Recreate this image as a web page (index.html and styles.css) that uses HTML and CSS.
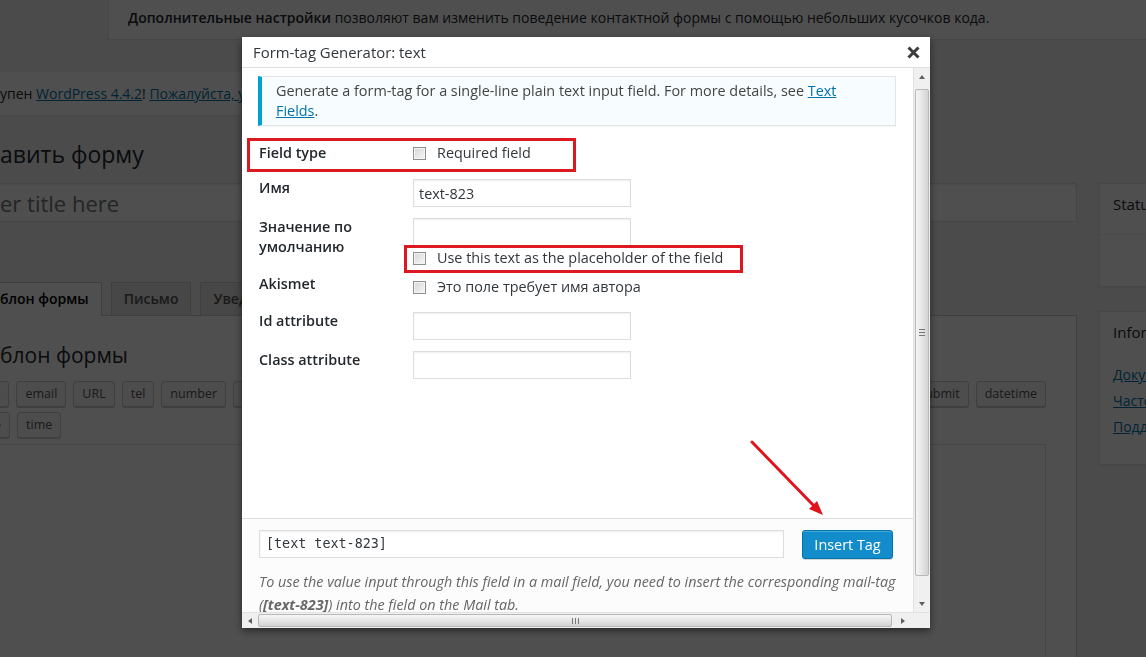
FILE: index.html
```html
<!DOCTYPE html>
<html lang="ru">
<head>
<meta charset="utf-8">
<title>Редактировать форму ‹ Contact Form 7</title>
<link rel="stylesheet" href="styles.css">
</head>
<body>
<div class="wp-page">
  <div class="top-note"><strong>Дополнительные настройки</strong> позволяют вам изменить поведение контактной формы с помощью небольших кусочков кода.</div>
  <div class="nag">упен <a href="#">WordPress 4.4.2</a>! <a href="#">Пожалуйста, уведомите администратора сайта</a>.</div>
  <h1 class="page-title">авить форму</h1>
  <div class="columns">
    <div class="main-col">
      <div class="title-input">er title here</div>
      <ul class="tabs">
        <li class="tab active">блон формы</li>
        <li class="tab">Письмо</li>
        <li class="tab">Уведомления при отправке формы</li>
      </ul>
      <div class="panel">
        <h2 class="panel-title">блон формы</h2>
        <div class="tag-row">
          <div class="tag-group">
            <span class="tag-btn">text</span>
            <span class="tag-btn">email</span>
            <span class="tag-btn">URL</span>
            <span class="tag-btn">tel</span>
            <span class="tag-btn">number</span>
            <span class="tag-btn">textarea</span>
          </div>
          <div class="tag-group">
            <span class="tag-btn">submit</span>
            <span class="tag-btn">datetime</span>
          </div>
        </div>
        <div class="tag-row second">
          <div class="tag-group">
            <span class="tag-btn">date</span>
            <span class="tag-btn">time</span>
          </div>
        </div>
        <div class="form-textarea"></div>
      </div>
    </div>
    <aside class="side-col">
      <div class="postbox status">
        <h2 class="postbox-title">Status</h2>
        <div class="postbox-body"></div>
      </div>
      <div class="postbox info">
        <h2 class="postbox-title">Information</h2>
        <ul class="info-links">
          <li><a href="#">Документация</a></li>
          <li><a href="#">Часто задаваемые вопросы</a></li>
          <li><a href="#">Поддержка</a></li>
        </ul>
      </div>
    </aside>
  </div>
</div>

<div class="overlay"></div>

<div class="modal">
  <div class="modal-head">
    <span class="modal-title">Form-tag Generator: text</span>
    <svg class="close-ico" width="13" height="13" viewBox="0 0 13 13" aria-hidden="true"><path d="M1.5 1.5 L11.5 11.5 M11.5 1.5 L1.5 11.5" stroke="#3c3c3c" stroke-width="3" fill="none"/></svg>
  </div>
  <div class="modal-main">
    <div class="modal-content">
      <div class="tg-main">
        <div class="notice">Generate a form-tag for a single-line plain text input field. For more details, see <a href="#">Text<br>Fields</a>.</div>
        <div class="tg-rows">
          <div class="tg-row r1">
            <div class="tg-label">Field type</div>
            <div class="tg-ctrl"><label class="cb"><input type="checkbox"><span>Required field</span></label></div>
          </div>
          <div class="tg-row r2">
            <div class="tg-label">Имя</div>
            <div class="tg-ctrl"><input class="txt" type="text" value="text-823"></div>
          </div>
          <div class="tg-row r3">
            <div class="tg-label">Значение по умолчанию</div>
            <div class="tg-ctrl"><input class="txt" type="text" value=""><label class="cb cb-under"><input type="checkbox"><span>Use this text as the placeholder of the field</span></label></div>
          </div>
          <div class="tg-row r4">
            <div class="tg-label">Akismet</div>
            <div class="tg-ctrl"><label class="cb"><input type="checkbox"><span>Это поле требует имя автора</span></label></div>
          </div>
          <div class="tg-row r5">
            <div class="tg-label">Id attribute</div>
            <div class="tg-ctrl"><input class="txt" type="text" value=""></div>
          </div>
          <div class="tg-row r6">
            <div class="tg-label">Class attribute</div>
            <div class="tg-ctrl"><input class="txt" type="text" value=""></div>
          </div>
        </div>
      </div>
      <div class="insert-box">
        <div class="insert-row">
          <div class="tag-input">[text text-823]</div>
          <span class="btn-primary">Insert Tag</span>
        </div>
        <p class="mail-hint">To use the value input through this field in a mail field, you need to insert the corresponding mail-tag<br>(<strong>[text-823]</strong>) into the field on the Mail tab.</p>
      </div>
      <div class="annot box-one"></div>
      <div class="annot box-two"></div>
      <svg class="annot-arrow" width="671" height="544" viewBox="0 0 671 544" aria-hidden="true">
        <line x1="510" y1="374" x2="574" y2="440" stroke="#e0141c" stroke-width="3" stroke-linecap="round"/>
        <polygon points="581,447 567,441 575,433" fill="#e0141c"/>
      </svg>
    </div>
    <div class="vscroll">
      <div class="sb-btn"><span class="tri-up"></span></div>
      <div class="vthumb"><span class="grip-h"></span></div>
      <div class="sb-fill"></div>
      <div class="sb-btn"><span class="tri-down"></span></div>
    </div>
  </div>
  <div class="hscroll">
    <div class="sb-btn-h"><span class="tri-left"></span></div>
    <div class="hthumb"><span class="grip-v"></span></div>
    <div class="sb-btn-h wide"><span class="tri-right"></span></div>
    <div class="sb-corner"></div>
  </div>
</div>
</body>
</html>
```

FILE: styles.css
```css
html, body {
  margin: 0;
  padding: 0;
  height: 100%;
  overflow: hidden;
}
body {
  background: #f1f1f1;
  font-family: "Open Sans", "Noto Sans", sans-serif;
  font-size: 14px;
  color: #23282d;
}
a { color: #0073aa; text-decoration: underline; }

/* ---------- underlying WP page ---------- */
.wp-page {
  width: 1146px;
}
.top-note {
  margin-left: 108px;
  height: 40px;
  box-sizing: border-box;
  background: #fff;
  border-left: 1px solid #e5e5e5;
  border-bottom: 1px solid #e5e5e5;
  padding: 8px 0 0 19px;
  line-height: 20px;
  white-space: nowrap;
  overflow: hidden;
}
.top-note strong { font-weight: 600; }
.nag {
  display: inline-block;
  margin-top: 32px;
  background: #fff;
  padding: 11px 15px 11px 0;
  line-height: 21px;
  box-shadow: 0 1px 1px rgba(0,0,0,.04);
  white-space: nowrap;
}
.page-title {
  margin: 24px 0 0;
  font-size: 23px;
  font-weight: 400;
  line-height: 30px;
}
.columns {
  display: flex;
  gap: 22px;
  margin-top: 14px;
}
.main-col { width: 1077px; flex: none; }
.side-col { width: 280px; flex: none; }
.title-input {
  height: 39px;
  box-sizing: border-box;
  background: #fff;
  border: 1px solid #ddd;
  border-left: none;
  font-size: 22px;
  line-height: 39px;
  color: #72777c;
  box-shadow: inset 0 1px 2px rgba(0,0,0,.07);
}
.tabs {
  list-style: none;
  margin: 60px 0 0;
  padding: 0;
  display: flex;
  gap: 9px;
  position: relative;
  z-index: 1;
}
.tab {
  height: 33px;
  box-sizing: border-box;
  border: 1px solid #ccc;
  border-bottom: none;
  background: #e4e4e4;
  color: #555;
  font-weight: 600;
  padding: 0 12px;
  line-height: 31px;
  white-space: nowrap;
}
.tab.active {
  background: #fdfdfd;
  color: #000;
  border-left: none;
  padding-left: 0;
  height: 34px;
}
.panel {
  margin-top: -1px;
  border: 1px solid #ccc;
  border-left: none;
  background: #fdfdfd;
  padding: 25px 30px 0 0;
  height: 400px;
}
.panel-title {
  margin: 0;
  font-size: 21px;
  font-weight: 400;
  line-height: 28px;
}
.tag-row {
  display: flex;
  justify-content: space-between;
  margin: 12px 0 0 -31px;
}
.tag-row.second { margin: 5px 0 0 -34px; }
.tag-group { display: flex; gap: 7px; }
.tag-btn {
  height: 26px;
  box-sizing: border-box;
  border: 1px solid #ccc;
  border-radius: 3px;
  background: #f7f7f7;
  box-shadow: 0 1px 0 #ccc;
  padding: 0 8px;
  font-size: 12.5px;
  line-height: 24px;
  color: #555;
  white-space: nowrap;
}
.form-textarea {
  margin: 6px 0 0 -33px;
  height: 300px;
  background: #fff;
  border: 1px solid #ddd;
}
.postbox {
  background: #fff;
  border: 1px solid #e5e5e5;
  box-shadow: 0 1px 1px rgba(0,0,0,.04);
}
.postbox-title {
  margin: 0;
  font-size: 15px;
  font-weight: 400;
  line-height: 20px;
  padding: 10px 13px;
}
.status .postbox-title {
  padding-bottom: 20px;
  border-bottom: 1px solid #eee;
}
.status .postbox-body { height: 51px; }
.info { margin-top: 24px; }
.info-links {
  list-style: none;
  margin: 10px 0 0;
  padding: 0 13px 24px;
  line-height: 26px;
}

/* ---------- overlay ---------- */
.overlay {
  position: fixed;
  inset: 0;
  z-index: 10;
  background: rgba(0,0,0,.69);
}

/* ---------- modal ---------- */
.modal {
  position: fixed;
  z-index: 20;
  left: 242px;
  top: 37px;
  width: 688px;
  height: 591px;
  background: #fff;
  box-shadow: 0 3px 8px rgba(0,0,0,.5);
  display: flex;
  flex-direction: column;
  font-size: 14.4px;
}
.modal-head {
  height: 31px;
  box-sizing: border-box;
  border-bottom: 1px solid #ddd;
  padding: 0 10px 0 11px;
  display: flex;
  align-items: center;
  justify-content: space-between;
}
.modal-title { font-size: 14.9px; color: #32373c; line-height: 30px; }
.close-ico { display: block; }
.modal-main {
  flex: 1;
  display: flex;
  min-height: 0;
}
.modal-content {
  flex: 1;
  position: relative;
  overflow: hidden;
}
.tg-main {
  height: 450px;
  box-sizing: border-box;
  padding: 8px 17px 0 16px;
}
.notice {
  border: 1px solid #e5e5e5;
  border-left: 4px solid #00a0d2;
  background: #f7fcfe;
  padding: 4px 12px 4px 14px;
  line-height: 20px;
  color: #444;
  box-shadow: 0 1px 1px rgba(0,0,0,.04);
}
.tg-rows { margin-top: 13px; }
.tg-row { display: flex; }
.tg-label {
  width: 154px;
  padding-left: 1px;
  flex: none;
  font-weight: 600;
  line-height: 20px;
  color: #23282d;
}
.tg-ctrl { flex: 1; }
.r1 { padding: 4px 0 11px; }
.r2, .r5, .r6 { padding: 0 0 6px; }
.r2 .tg-label, .r3 .tg-label, .r4 .tg-label, .r5 .tg-label, .r6 .tg-label { padding-top: 4px; }
.r2 .tg-ctrl, .r3 .tg-ctrl, .r5 .tg-ctrl, .r6 .tg-ctrl { padding-top: 5px; }
.r3 { padding-bottom: 2px; }
.r4 .tg-ctrl { padding-top: 7px; }
.r4 { padding-bottom: 10px; }
.txt {
  display: block;
  width: 218px;
  height: 28px;
  box-sizing: border-box;
  margin: 0;
  border: 1px solid #ddd;
  box-shadow: inset 0 1px 2px rgba(0,0,0,.07);
  padding: 0 5px;
  font-family: "Open Sans", sans-serif;
  font-size: 14.4px;
  color: #32373c;
  background: #fff;
  outline: none;
}
.cb {
  display: flex;
  align-items: center;
  gap: 11px;
  height: 20px;
  line-height: 20px;
  color: #32373c;
  white-space: nowrap;
}
.cb-under { margin-top: 2px; }
.cb input {
  -webkit-appearance: none;
  appearance: none;
  margin: 0;
  width: 13px;
  height: 13px;
  box-sizing: border-box;
  border: 1px solid #8f8f8f;
  background: linear-gradient(135deg, #d6d6d6, #f7f7f7);
  box-shadow: inset 0 0 0 1px #f4f4f4;
  flex: none;
}
.insert-box {
  border-top: 1px solid #dfdfdf;
  background: #fcfcfc;
  padding: 11px 20px 0 17px;
  height: 200px;
}
.insert-row {
  display: flex;
  justify-content: space-between;
  align-items: flex-start;
}
.tag-input {
  width: 525px;
  height: 28px;
  box-sizing: border-box;
  border: 1px solid #ddd;
  background: #fff;
  box-shadow: inset 0 1px 2px rgba(0,0,0,.07);
  padding: 0 6px;
  font-family: "DejaVu Sans Mono", "Liberation Mono", monospace;
  font-size: 13.4px;
  line-height: 26px;
  color: #32373c;
}
.btn-primary {
  width: 91px;
  height: 29px;
  box-sizing: border-box;
  border: 1px solid #0073aa;
  border-radius: 3px;
  background: #138ccb;
  box-shadow: inset 0 1px 0 rgba(120,200,230,.5), 0 1px 0 rgba(0,0,0,.15);
  color: #fff;
  font-size: 14.4px;
  line-height: 27px;
  text-align: center;
}
.mail-hint {
  margin: 11px 0 0;
  font-style: italic;
  font-size: 14.35px;
  line-height: 23px;
  color: #666;
  white-space: nowrap;
}
.mail-hint strong { font-weight: 700; }

/* annotations drawn over the screenshot */
.annot {
  position: absolute;
  border: 3px solid #dc1820;
  box-sizing: border-box;
  pointer-events: none;
}
.box-one { left: 5px; top: 70px; width: 329px; height: 34px; }
.box-two { left: 162px; top: 177px; width: 339px; height: 28px; }
.annot-arrow {
  position: absolute;
  left: 0;
  top: 0;
  pointer-events: none;
}

/* fake scrollbars */
.vscroll {
  width: 17px;
  box-sizing: border-box;
  border-left: 1px solid #e2e2e2;
  background: #f0f0f0;
  display: flex;
  flex-direction: column;
  align-items: center;
}
.sb-btn {
  height: 17px;
  width: 16px;
  flex: none;
  display: flex;
  align-items: center;
  justify-content: center;
}
.tri-up, .tri-down, .tri-left, .tri-right {
  width: 0; height: 0;
  border: 3px solid transparent;
}
.tri-up { border-bottom: 4px solid #606060; border-top: 0; }
.tri-down { border-top: 4px solid #606060; border-bottom: 0; }
.tri-left { border-right: 4px solid #606060; border-left: 0; }
.tri-right { border-left: 4px solid #606060; border-right: 0; }
.vthumb {
  margin-top: 4px;
  width: 14px;
  height: 487px;
  box-sizing: border-box;
  border: 1px solid #b8b8b8;
  border-radius: 2px;
  background: linear-gradient(to right, #f6f6f6, #e2e2e2 60%, #d2d2d2);
  display: flex;
  align-items: center;
  justify-content: center;
  flex: none;
}
.grip-h {
  width: 6px;
  height: 5px;
  border-top: 1px solid #777;
  border-bottom: 1px solid #777;
  position: relative;
}
.grip-h::after {
  content: "";
  position: absolute;
  left: 0; right: 0; top: 2px;
  border-top: 1px solid #777;
}
.sb-fill { flex: 1; }
.hscroll {
  height: 16px;
  display: flex;
  background: #f0f0f0;
  border-top: 1px solid #e2e2e2;
  box-sizing: border-box;
}
.sb-btn-h {
  width: 16px;
  flex: none;
  display: flex;
  align-items: center;
  justify-content: center;
}
.sb-btn-h.wide { width: 21px; }
.hthumb {
  flex: 1;
  margin: 1px 0;
  box-sizing: border-box;
  border: 1px solid #b8b8b8;
  border-radius: 2px;
  background: linear-gradient(to bottom, #f6f6f6, #e2e2e2 60%, #d2d2d2);
  display: flex;
  align-items: center;
  justify-content: center;
}
.grip-v {
  width: 5px;
  height: 6px;
  border-left: 1px solid #777;
  border-right: 1px solid #777;
  position: relative;
}
.grip-v::after {
  content: "";
  position: absolute;
  top: 0; bottom: 0; left: 2px;
  border-left: 1px solid #777;
}
.sb-corner { width: 17px; flex: none; background: #f0f0f0; }
```
